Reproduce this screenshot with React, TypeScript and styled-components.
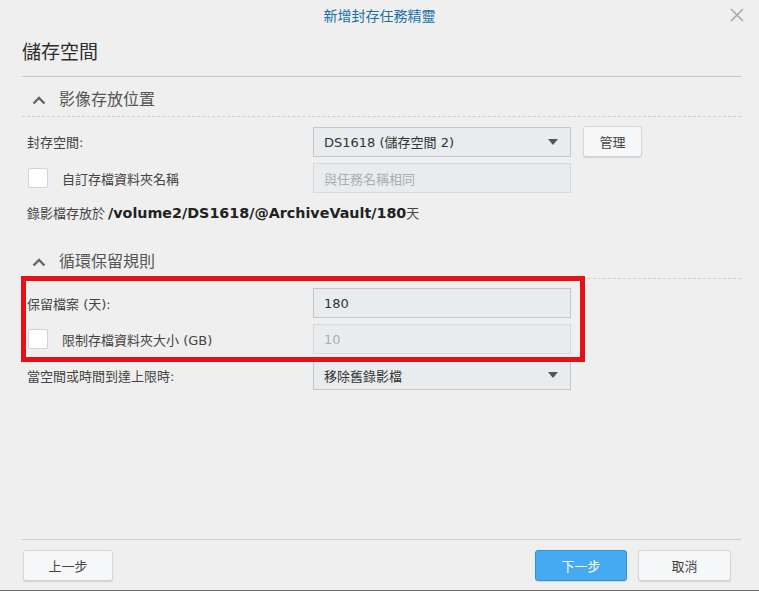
import React, { useState } from 'react';
import styled, { createGlobalStyle } from 'styled-components';

const GlobalStyle = createGlobalStyle`
  html, body {
    margin: 0;
    padding: 0;
    background: #efefef;
  }
  * {
    box-sizing: border-box;
  }
`;

const font = `"DejaVu Sans", "Noto Sans CJK TC", sans-serif`;

// Window frame
const Window = styled.div`
  width: 759px;
  height: 591px;
  display: flex;
  flex-direction: column;
  background: #efefef;
  font-family: ${font};
  font-size: 13px;
  color: #333;
  border-bottom: 1px solid #6a6a6a;
`;

const TitleBar = styled.div`
  height: 29px;
  display: grid;
  grid-template-columns: 1fr auto 1fr;
  align-items: center;
`;

const TitleText = styled.div`
  grid-column: 2;
  font-size: 14px;
  color: #1d6fa5;
  padding-top: 1px;
`;

const CloseButton = styled.button`
  grid-column: 3;
  justify-self: end;
  margin-right: 14px;
  width: 16px;
  height: 16px;
  padding: 0;
  border: 0;
  background: transparent;
  display: flex;
  align-items: center;
  justify-content: center;
  cursor: pointer;
`;

const Body = styled.div`
  flex: 1;
  display: flex;
  flex-direction: column;
  padding: 0 18px 0 22px;
`;

const PageTitle = styled.h1`
  margin: 0;
  padding: 10px 0 11px;
  font-size: 19px;
  line-height: 26px;
  font-weight: normal;
  color: #2e2e2e;
  border-bottom: 1px solid #c9c9c9;
`;

const Section = styled.section<{ $gap?: number }>`
  margin-top: ${(p) => p.$gap ?? 0}px;
`;

const SectionHeader = styled.div`
  display: flex;
  align-items: center;
  gap: 13px;
  padding: 12px 0 5px 10px;
  font-size: 16px;
  line-height: 22px;
  color: #555;
  border-bottom: 1px dashed #cfcfcf;
`;

const Rows = styled.div`
  display: flex;
  flex-direction: column;
  gap: 6px;
  padding-top: 9px;
`;

const Row = styled.div`
  display: grid;
  grid-template-columns: 279px 258px auto;
  align-items: center;
  column-gap: 12px;
`;

const Label = styled.label`
  display: flex;
  align-items: center;
  gap: 14px;
  padding-left: 5px;
  color: #444;
`;

const Checkbox = styled.span`
  width: 20px;
  height: 20px;
  margin-left: 1px;
  background: #fff;
  border: 1px solid #cfd2d6;
  border-radius: 2px;
`;

const Field = styled.div<{ $disabled?: boolean }>`
  height: 30px;
  display: flex;
  align-items: center;
  justify-content: space-between;
  padding: 0 10px;
  background: #e9ecef;
  border: 1px solid ${(p) => (p.$disabled ? '#d6d9dc' : '#c3c7cb')};
  color: ${(p) => (p.$disabled ? '#a9acb0' : '#333')};
  font-size: 13px;
`;

const Arrow = styled.span`
  width: 0;
  height: 0;
  margin-right: 2px;
  border-left: 5px solid transparent;
  border-right: 5px solid transparent;
  border-top: 6px solid #555;
`;

const Button = styled.button<{ $primary?: boolean; $width?: number }>`
  height: 31px;
  width: ${(p) => p.$width ?? 90}px;
  font-family: ${font};
  font-size: 13px;
  border-radius: 3px;
  border: 1px solid ${(p) => (p.$primary ? '#2f93dc' : '#d3d5d8')};
  background: ${(p) => (p.$primary ? '#45aaf2' : '#f6f7f9')};
  color: ${(p) => (p.$primary ? '#fff' : '#444')};
  box-shadow: 0 1px 1px rgba(0, 0, 0, 0.12);
  cursor: pointer;
`;

const PathLine = styled.div`
  margin-top: 10px;
  padding-left: 5px;
  line-height: 20px;
  color: #444;
`;

const PathValue = styled.b`
  margin-left: 3px;
  font-size: 14.3px;
  color: #222;
`;

// Red annotation frame drawn over the highlighted rows
const Highlight = styled.div`
  position: relative;
  display: flex;
  flex-direction: column;
  gap: 6px;

  &::after {
    content: '';
    position: absolute;
    top: -12px;
    bottom: -8px;
    left: -1px;
    right: 156px;
    border: 5px solid #e2111a;
    pointer-events: none;
  }
`;

const Footer = styled.div`
  margin-top: auto;
  border-top: 1px solid #cdcdcd;
  padding: 10px 10px 9px 1px;
  display: flex;
  gap: 11px;
`;

const Spacer = styled.div`
  flex: 1;
`;

const Chevron = () => (
  <svg width="14" height="9" viewBox="0 0 14 9">
    <path d="M1.5 7.5 L7 2 L12.5 7.5" fill="none" stroke="#666" strokeWidth="2.4" />
  </svg>
);

const CloseIcon = () => (
  <svg width="14" height="14" viewBox="0 0 14 14">
    <path d="M1 1 L13 13 M13 1 L1 13" stroke="#a8a8a8" strokeWidth="1.6" />
  </svg>
);

const App = () => {
  const [volume] = useState('DS1618 (儲存空間 2)');
  const [days] = useState('180');

  return (
    <>
      <GlobalStyle />
      <Window>
        <TitleBar>
          <TitleText>新增封存任務精靈</TitleText>
          <CloseButton aria-label="close">
            <CloseIcon />
          </CloseButton>
        </TitleBar>

        <Body>
          <PageTitle>儲存空間</PageTitle>

          <Section>
            <SectionHeader>
              <Chevron />
              影像存放位置
            </SectionHeader>
            <Rows>
              <Row>
                <Label>封存空間:</Label>
                <Field>
                  {volume}
                  <Arrow />
                </Field>
                <Button $width={59}>管理</Button>
              </Row>
              <Row>
                <Label>
                  <Checkbox />
                  自訂存檔資料夾名稱
                </Label>
                <Field $disabled>與任務名稱相同</Field>
              </Row>
            </Rows>
            <PathLine>
              錄影檔存放於<PathValue>/volume2/DS1618/@ArchiveVault/{days}</PathValue>天
            </PathLine>
          </Section>

          <Section $gap={15}>
            <SectionHeader>
              <Chevron />
              循環保留規則
            </SectionHeader>
            <Rows>
              <Highlight>
                <Row>
                  <Label>保留檔案 (天):</Label>
                  <Field>{days}</Field>
                </Row>
                <Row>
                  <Label>
                    <Checkbox />
                    限制存檔資料夾大小 (GB)
                  </Label>
                  <Field $disabled>10</Field>
                </Row>
              </Highlight>
              <Row>
                <Label>當空間或時間到達上限時:</Label>
                <Field>
                  移除舊錄影檔
                  <Arrow />
                </Field>
              </Row>
            </Rows>
          </Section>

          <Footer>
            <Button>上一步</Button>
            <Spacer />
            <Button $primary $width={92}>下一步</Button>
            <Button $width={93}>取消</Button>
          </Footer>
        </Body>
      </Window>
    </>
  );
};

export default App;
